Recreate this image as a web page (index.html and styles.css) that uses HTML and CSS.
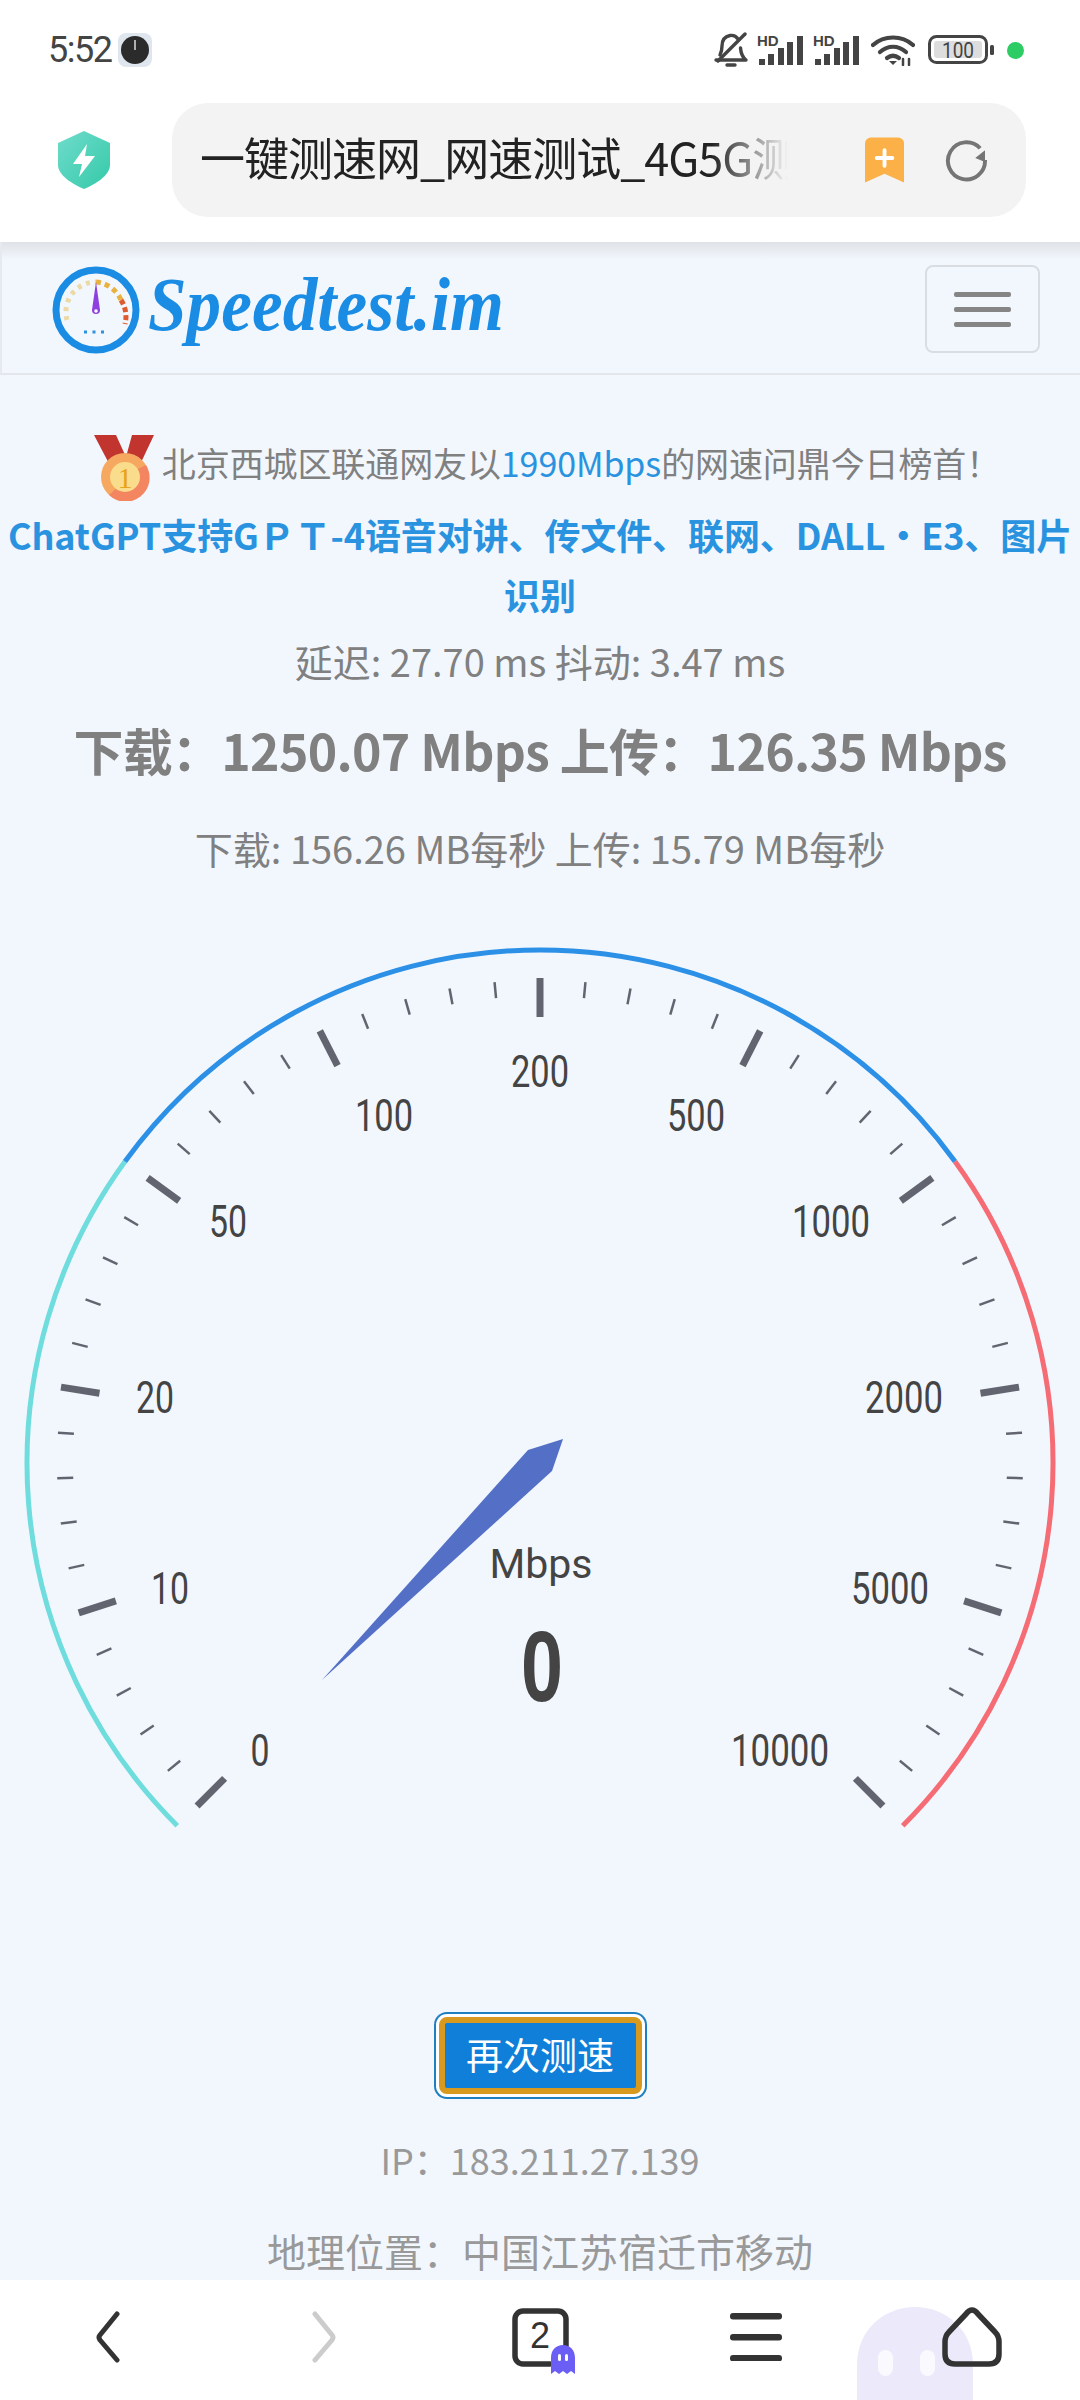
FILE: index.html
```html
<!DOCTYPE html>
<html lang="zh-CN">

<head>
    <meta charset="UTF-8">
    <meta name="viewport" content="width=device-width, initial-scale=1">
    <title>一键测速网</title>
    <link rel="stylesheet" href="styles.css">
</head>

<body>
    <div class="statusbar">
        <span class="time">5:52</span>
        <svg class="clock" viewBox="0 0 34 34" width="34" height="34">
            <rect x="0" y="0" width="34" height="34" rx="8" fill="#dfe6ee" />
            <circle cx="17" cy="17" r="14" fill="#2b2b2b" />
            <line x1="17" y1="7" x2="17" y2="17" stroke="#ddd" stroke-width="1.5" />
        </svg>
        <div class="status-icons">
            <svg viewBox="0 0 34 36" width="34" height="36" fill="none" stroke="#444" stroke-width="3.4" stroke-linecap="round" stroke-linejoin="round">
                <path d="M2 28h30c-4-3-5-6-5.500-12M24 7c-2-3-5-4-8-3.500C11 4.500 8 8 8 14c0 3-.5 6-2 9" />
                <path d="M4 29L31 2" />
                <path d="M13 33h8" />
            </svg>
            <svg class="signal" viewBox="0 -6 47 38" width="47" height="38">
                <text class="hd" x="0" y="12">HD</text>
                <g fill="#444">
                    <rect x="2" y="25" width="6" height="6" />
                    <rect x="11" y="20" width="6" height="11" />
                    <rect x="21" y="14" width="6" height="17" />
                    <rect x="30" y="8" width="6" height="23" />
                    <rect x="40" y="2" width="6" height="29" />
                </g>
            </svg>
            <svg class="signal" viewBox="0 -6 47 38" width="47" height="38">
                <text class="hd" x="0" y="12">HD</text>
                <g fill="#444">
                    <rect x="2" y="25" width="6" height="6" />
                    <rect x="11" y="20" width="6" height="11" />
                    <rect x="21" y="14" width="6" height="17" />
                    <rect x="30" y="8" width="6" height="23" />
                    <rect x="40" y="2" width="6" height="29" />
                </g>
            </svg>
            <svg class="wifi" viewBox="0 0 44 32" width="44" height="32" fill="none" stroke="#444" stroke-width="4.200" stroke-linecap="round">
                <path d="M2 11C13 1 31 1 42 11" />
                <path d="M9 18c8-7 18-7 26 0" />
                <path d="M16 24c4-3 8-3 12 0" />
                <path d="M22 31l-4-4h8z" fill="#444" stroke="none" />
                <path d="M32 25v6M38 25v6" stroke-width="2.500" />
            </svg>
            <svg class="battery" viewBox="0 0 66 30" width="66" height="30">
                <rect x="1.500" y="1.500" width="57" height="26" rx="7" fill="none" stroke="#444" stroke-width="3" />
                <rect x="6" y="6" width="48" height="17" rx="3" fill="#ddd" />
                <text x="30" y="23" text-anchor="middle" textLength="32" lengthAdjust="spacingAndGlyphs">100</text>
                <rect x="62" y="10" width="4" height="10" rx="1.500" fill="#444" />
            </svg>
            <span class="dot"></span>
        </div>
    </div>

    <div class="toolbar">
        <svg class="shield" viewBox="0 0 52 58" width="52" height="58">
            <defs>
                <linearGradient id="shieldFill" x1="0" y1="0" x2="1" y2="1">
                    <stop offset="0" stop-color="#6fdccb" />
                    <stop offset="1" stop-color="#35c9a9" />
                </linearGradient>
            </defs>
            <path d="M26 0L52 12V34C52 44 38 53 26 58C14 53 0 44 0 34V12Z" fill="url(#shieldFill)" />
            <path d="M29 13L15 33H24L21 46L37 25H27Z" fill="#fff" />
        </svg>
        <div class="address">
            <span class="address-text">一键测速网_网速测试_4G5G测速</span>
            <svg class="bookmark" viewBox="0 0 40 46" width="40" height="46">
                <path d="M6 0H34A6 6 0 0 1 40 6V46L20 37L0 46V6A6 6 0 0 1 6 0Z" fill="#fbb147" />
                <path d="M20 13V29M12 21H28" stroke="#fff" stroke-width="4" stroke-linecap="round" />
            </svg>
            <svg class="refresh" viewBox="0 0 44 44" width="44" height="44" fill="none" stroke="#757575" stroke-width="4">
                <path d="M36 10A19 19 0 1 0 41 22" />
                <path d="M41 12L41 24L31 20Z" fill="#757575" stroke="none" />
            </svg>
        </div>
    </div>

    <div class="content">
        <nav class="topnav">
            <div class="brand">
                <svg class="brand-mark" viewBox="0 0 88 88" width="88" height="88" fill="none">
                    <circle cx="44" cy="44" r="40" stroke="#1a8ce4" stroke-width="7" />
                    <path d="M15 54A30 30 0 0 1 44 16" stroke="#ecd9a4" stroke-width="5" stroke-dasharray="4 5" />
                    <path d="M44 16A30 30 0 0 1 69 34" stroke="#e9b13f" stroke-width="5" stroke-dasharray="5 4" />
                    <path d="M69 34A30 30 0 0 1 73 58" stroke="#df5a2e" stroke-width="5" stroke-dasharray="5 3" />
                    <path d="M44 16L48 44A4 4 0 1 1 40 44Z" fill="#8e3fe0" />
                    <circle cx="44" cy="45" r="1.800" fill="#fff" />
                    <path d="M32 66h24" stroke="#2a93e0" stroke-width="3" stroke-dasharray="3 5.500" />
                </svg>
                <svg class="brand-name" viewBox="0 0 360 100" width="360" height="100">
                    <text x="2" y="72" textLength="356" lengthAdjust="spacingAndGlyphs">Speedtest.im</text>
                </svg>
            </div>
            <button class="menu-btn" type="button" aria-label="menu">
                <span></span>
                <span></span>
                <span></span>
            </button>
        </nav>

        <main class="result">
            <p class="notice">
                <svg class="medal" viewBox="0 0 60 66" width="60" height="66">
                    <path d="M0 0H22L32 22L38 0H60L42 38H20Z" fill="#c2352e" />
                    <circle cx="31" cy="42" r="24" fill="#f6a860" />
                    <path d="M15 60A24 24 0 0 0 52 30L44 34Z" fill="#f38660" />
                    <circle cx="31" cy="42" r="15" fill="#f9dc8c" />
                    <text x="31" y="53" text-anchor="middle">1</text>
                </svg>
                <span>北京西城区联通网友以<a class="hl" href="#">1990Mbps</a>的网速问鼎今日榜首！</span>
            </p>
            <p class="promo"><a href="#">ChatGPT支持GＰＴ-4语音对讲、传文件、联网、DALL・E3、图片识别</a></p>
            <p class="latency">延迟: 27.70 ms 抖动: 3.47 ms</p>
            <p class="speed">下载：1250.07 Mbps 上传：126.35 Mbps</p>
            <p class="rate">下载: 156.26 MB每秒 上传: 15.79 MB每秒</p>

            <svg id="gauge" class="gauge" viewBox="0 0 1080 920" width="1080" height="920">
                <g id="ticks"></g>
                <g class="gauge-labels">
                    <text x="260" y="836" textLength="19" lengthAdjust="spacingAndGlyphs">0</text>
                    <text x="170" y="674" textLength="38" lengthAdjust="spacingAndGlyphs">10</text>
                    <text x="155" y="483" textLength="38" lengthAdjust="spacingAndGlyphs">20</text>
                    <text x="228" y="307" textLength="38" lengthAdjust="spacingAndGlyphs">50</text>
                    <text x="384" y="201" textLength="58" lengthAdjust="spacingAndGlyphs">100</text>
                    <text x="540" y="157" textLength="58" lengthAdjust="spacingAndGlyphs">200</text>
                    <text x="696" y="201" textLength="58" lengthAdjust="spacingAndGlyphs">500</text>
                    <text x="831" y="307" textLength="78" lengthAdjust="spacingAndGlyphs">1000</text>
                    <text x="904" y="483" textLength="78" lengthAdjust="spacingAndGlyphs">2000</text>
                    <text x="890" y="674" textLength="78" lengthAdjust="spacingAndGlyphs">5000</text>
                    <text x="780" y="836" textLength="98" lengthAdjust="spacingAndGlyphs">10000</text>
                </g>
                <polygon points="322,750 528,520 563,509 552,541" fill="#5470c6" />
                <text class="gauge-unit" x="541" y="648">Mbps</text>
                <text class="gauge-value" x="542" y="771" textLength="42" lengthAdjust="spacingAndGlyphs">0</text>
            </svg>

            <button class="again-btn" type="button">再次测速</button>
            <p class="info ip">IP：183.211.27.139</p>
            <p class="info geo">地理位置：中国江苏宿迁市移动</p>
        </main>
    </div>

    <div class="bottombar">
        <svg class="ghost-bg" viewBox="0 0 116 94" width="116" height="94">
            <path d="M0 94V58C0 22 28 0 58 0S116 22 116 58V94Z" fill="#ece9fb" />
            <rect x="21" y="43" width="15" height="26" rx="7.500" fill="#fff" opacity=".75" />
            <rect x="63" y="43" width="15" height="26" rx="7.500" fill="#fff" opacity=".75" />
        </svg>
        <div class="bottom-slot">
            <svg viewBox="0 0 26 52" width="26" height="52" fill="none" stroke="#333" stroke-width="5" stroke-linecap="round" stroke-linejoin="round">
                <path d="M22 3L5 24Q3 26 5 29L22 49" />
            </svg>
        </div>
        <div class="bottom-slot">
            <svg viewBox="0 0 26 52" width="26" height="52" fill="none" stroke="#ccc" stroke-width="5" stroke-linecap="round" stroke-linejoin="round">
                <path d="M4 3L21 24Q23 26 21 29L4 49" />
            </svg>
        </div>
        <div class="bottom-slot tabs-slot">
            <svg viewBox="0 0 66 68" width="66" height="68">
                <path d="M40 56H13A8 8 0 0 1 5 48V11A8 8 0 0 1 13 3H48A8 8 0 0 1 56 11V38" fill="none" stroke="#333" stroke-width="5.500" stroke-linecap="round" />
                <text class="tab-count" x="30" y="40" text-anchor="middle">2</text>
                <path d="M41 66V50C41 42 46 37 53 37S65 42 65 50V66L61 63L57 66L53 63L49 66L45 63Z" fill="#6a5ef5" />
                <rect x="48" y="46" width="3" height="7" rx="1.500" fill="#fff" />
                <rect x="55" y="46" width="3" height="7" rx="1.500" fill="#fff" />
            </svg>
        </div>
        <div class="bottom-slot">
            <svg viewBox="0 0 52 48" width="52" height="48" fill="#333">
                <rect y="0" width="52" height="6.500" rx="3" />
                <rect y="21" width="52" height="6.500" rx="3" />
                <rect y="42" width="52" height="6.500" rx="3" />
            </svg>
        </div>
        <div class="bottom-slot">
            <svg viewBox="0 0 62 62" width="62" height="62" fill="none" stroke="#333" stroke-width="5.500" stroke-linejoin="round">
                <path d="M31 4Q28 4 25 8L8 26Q4 30 4 36V48Q4 58 14 58H48Q58 58 58 48V36Q58 30 54 26L37 8Q34 4 31 4Z" />
            </svg>
        </div>
    </div>

    <script src="gauge.js"></script>
</body>

</html>
```

FILE: styles.css
```css
* {
    box-sizing: border-box;
}

body {
    margin: 0;
    width: 1080px;
    height: 2400px;
    overflow: hidden;
    display: flex;
    flex-direction: column;
    background-color: #fff;
    font-family: "Noto Sans CJK SC", "Liberation Sans", sans-serif;
}

p {
    margin: 0;
    text-align: center;
}

a {
    text-decoration: none;
}

/* status bar */
.statusbar {
    height: 100px;
    flex: none;
    display: flex;
    align-items: center;
    padding: 0 56px 0 48px;
}

.time {
    font-family: Roboto, sans-serif;
    font-size: 36px;
    color: #444;
    display: inline-block;
    width: 64px;
    letter-spacing: -1.5px;
}

.clock {
    margin-left: 6px;
}

.status-icons {
    margin-left: auto;
    display: flex;
    align-items: center;
    gap: 9px;
}

.signal {
    margin-bottom: 6px;
}

.hd {
    font-family: "Liberation Sans", sans-serif;
    font-size: 15px;
    font-weight: 700;
    fill: #444;
}

.wifi {
    margin-left: 2px;
}

.battery {
    margin-left: 4px;
}

.battery text {
    font-family: Roboto, sans-serif;
    font-size: 22px;
    fill: #444;
}

.dot {
    width: 17px;
    height: 17px;
    border-radius: 50%;
    margin-left: 4px;
    background-color: #2ecc64;
}

/* browser toolbar */
.toolbar {
    height: 142px;
    flex: none;
    display: flex;
    align-items: flex-start;
    padding: 3px 54px 0 58px;
}

.shield {
    margin-top: 28px;
}

.address {
    margin-left: 62px;
    width: 854px;
    height: 114px;
    border-radius: 36px;
    background-color: #f3f3f3;
    display: flex;
    align-items: center;
    padding: 0 38px 0 28px;
}

.address-text {
    width: 588px;
    flex: none;
    overflow: hidden;
    white-space: nowrap;
    font-size: 45px;
    line-height: 60px;
    margin-top: -7px;
    color: #222;
    letter-spacing: -1px;
    -webkit-mask-image: linear-gradient(to right, #000 87%, transparent);
    mask-image: linear-gradient(to right, #000 87%, transparent);
}

.bookmark {
    margin-left: 77px;
}

.refresh {
    margin-left: 41px;
}

/* page */
.content {
    height: 2038px;
    flex: none;
    overflow: hidden;
    background-color: #f2f7fe;
    background-image: linear-gradient(#dfe2e6, #f2f7fe 18px);
}

.topnav {
    height: 133px;
    display: flex;
    align-items: center;
    justify-content: space-between;
    padding: 0 40px 0 50px;
    border-left: 2px solid #e6e9ed;
    border-bottom: 2px solid #e3e6ea;
}

.brand {
    display: flex;
    align-items: center;
}

.brand-mark {
    margin-top: 4px;
}

.brand-name {
    margin-left: 6px;
}

.brand-name text {
    font-family: "Liberation Serif", serif;
    font-size: 76px;
    font-weight: 700;
    font-style: italic;
    fill: #1a8ce4;
}

.menu-btn {
    width: 115px;
    height: 88px;
    margin-top: 3px;
    padding: 0;
    background: transparent;
    border: 2px solid #d9dde2;
    border-radius: 8px;
    display: flex;
    flex-direction: column;
    align-items: center;
    justify-content: center;
    gap: 10px;
}

.menu-btn span {
    display: block;
    width: 57px;
    height: 5px;
    border-radius: 2px;
    background-color: #858585;
}

.result {
    padding-top: 60px;
    color: #808080;
}

.notice {
    height: 65px;
    display: flex;
    align-items: center;
    justify-content: center;
    font-size: 34px;
    letter-spacing: -0.1px;
    white-space: nowrap;
    padding: 0 2px 0 16px;
}

.notice span {
    margin-left: 8px;
    margin-top: -10px;
}

.medal {
    flex: none;
}

.medal text {
    font-family: "Liberation Serif", serif;
    font-size: 30px;
    fill: #e8a317;
}

.hl {
    color: #2a93e0;
}

.promo {
    margin-top: 4px;
    font-size: 36px;
    font-weight: 700;
    line-height: 60px;
    letter-spacing: -0.1px;
}

.promo a {
    color: #2a93e0;
}

.latency {
    margin-top: 7px;
    font-size: 38px;
    line-height: 60px;
}

.speed {
    margin-top: 23px;
    font-size: 50px;
    font-weight: 700;
    line-height: 70px;
    letter-spacing: -0.7px;
    white-space: nowrap;
}

.rate {
    margin-top: 39px;
    font-size: 38px;
    line-height: 50px;
}

.gauge {
    display: block;
    margin-top: 57px;
}

.gauge-labels text {
    font-family: Roboto, sans-serif;
    font-size: 44px;
    text-anchor: middle;
    fill: #444;
}

.gauge-unit {
    font-family: Roboto, sans-serif;
    font-size: 41px;
    text-anchor: middle;
    fill: #444;
}

.gauge-value {
    font-family: "Liberation Sans", sans-serif;
    font-size: 100px;
    font-weight: 700;
    text-anchor: middle;
    fill: #444;
}

.again-btn {
    display: block;
    width: 203px;
    height: 77px;
    margin: 167px auto 0;
    padding: 0 0 4px;
    font-family: inherit;
    font-size: 37px;
    color: #fff;
    background-color: #0f7fd9;
    border: 6px solid #d89a1e;
    border-radius: 8px;
    box-shadow: 0 0 0 3px #fff, 0 0 0 5px #1f7fc0;
}

.info {
    font-size: 36px;
    line-height: 50px;
    color: #999;
}

.ip {
    margin-top: 40px;
}

.geo {
    margin-top: 41px;
    font-size: 39px;
}

/* bottom navigation */
.bottombar {
    position: relative;
    height: 120px;
    flex: none;
    display: grid;
    grid-template-columns: repeat(5, 216px);
    align-items: center;
    overflow: hidden;
    background-color: #fff;
}

.bottom-slot {
    position: relative;
    display: flex;
    align-items: center;
    justify-content: center;
    padding-bottom: 6px;
}

.tabs-slot {
    padding-bottom: 0;
    padding-top: 4px;
    padding-left: 6px;
}

.tab-count {
    font-family: "Liberation Sans", sans-serif;
    font-size: 36px;
    fill: #333;
}

.ghost-bg {
    position: absolute;
    left: 857px;
    top: 27px;
}
```

FILE: gauge.js
```js
// draws the dial: 10 sections, each cut in 5, from -135deg to 135deg
var CX = 540;
var CY = 533;
var NS = 'http://www.w3.org/2000/svg';
var ticks = document.getElementById('ticks');

function point(deg, r) {
    var a = (deg - 90) * Math.PI / 180;
    return [CX + r * Math.cos(a), CY + r * Math.sin(a)];
}

function addArc(from, to, color) {
    var p1 = point(from, 513);
    var p2 = point(to, 513);
    var large = to - from > 180 ? 1 : 0;
    var path = document.createElementNS(NS, 'path');
    path.setAttribute('d', 'M' + p1[0] + ' ' + p1[1] + 'A513 513 0 ' + large + ' 1 ' + p2[0] + ' ' + p2[1]);
    path.setAttribute('fill', 'none');
    path.setAttribute('stroke', color);
    path.setAttribute('stroke-width', '5');
    ticks.appendChild(path);
}

addArc(-135, -54, '#6fdddd');
addArc(-54, 54, '#2b90e6');
addArc(54, 135, '#f56c75');

for (var i = 0; i <= 50; i++) {
    var deg = -135 + i * 5.4;
    var major = i % 5 === 0;
    var p1 = point(deg, major ? 485 : 483);
    var p2 = point(deg, major ? 446 : 467);
    var line = document.createElementNS(NS, 'line');
    line.setAttribute('x1', p1[0]);
    line.setAttribute('y1', p1[1]);
    line.setAttribute('x2', p2[0]);
    line.setAttribute('y2', p2[1]);
    line.setAttribute('stroke', '#62656f');
    line.setAttribute('stroke-width', major ? 7 : 2.5);
    ticks.appendChild(line);
}
```
